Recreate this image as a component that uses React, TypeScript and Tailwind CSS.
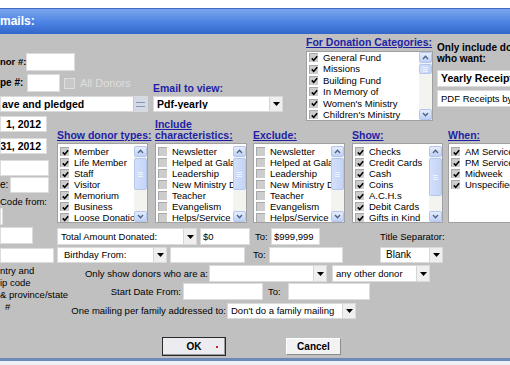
import React from "react";

const link = "font-bold text-[10.5px] text-[#1f1fa6] underline leading-[11px]";

const Check = () => (
  <svg width="7" height="7" viewBox="0 0 7 7">
    <path d="M0.8 3.4 L2.7 5.4 L6.2 1.2" fill="none" stroke="#000" strokeWidth="1.6" />
  </svg>
);

const Box = ({ checked }: { checked: boolean }) => (
  <span className="w-[9px] h-[9px] shrink-0 bg-[#cdcdcd] border-t border-l border-[#a8a8a8] flex items-center justify-center">
    {checked && <Check />}
  </span>
);

const Arrow = ({ up }: { up?: boolean }) => (
  <div className="h-[11px] shrink-0 rounded-[2px] border border-[#b4c6ee] bg-gradient-to-b from-[#e6eefd] to-[#c0d1f6] flex items-center justify-center">
    <svg width="7" height="5" viewBox="0 0 7 5">
      <path d={up ? "M1 4 L3.5 1.3 L6 4" : "M1 1 L3.5 3.7 L6 1"} fill="none" stroke="#4d6185" strokeWidth="1.4" />
    </svg>
  </div>
);

const ScrollBar = ({ thumb }: { thumb: string }) => (
  <div className="w-[13px] shrink-0 bg-[#f3f3ef] flex flex-col">
    <Arrow up />
    <div className={`${thumb} shrink-0 mt-[1px] rounded-[2px] border border-[#b4c6ee] bg-gradient-to-r from-[#d3e0fb] to-[#c4d4f7] flex flex-col items-center justify-center gap-[1px]`}>
      <div className="w-[5px] h-[1px] bg-[#eef3fe]" />
      <div className="w-[5px] h-[1px] bg-[#eef3fe]" />
      <div className="w-[5px] h-[1px] bg-[#eef3fe]" />
    </div>
    <div className="flex-1" />
    <Arrow />
  </div>
);

const ListBox = ({
  items,
  checked,
  className,
  row,
  thumb,
}: {
  items: string[];
  checked: boolean;
  className: string;
  row: string;
  thumb?: string;
}) => (
  <div className={`bg-white border border-[#a0a0a0] flex ${className}`}>
    <div className="flex-1 min-w-0 overflow-hidden pl-[2px]">
      {items.map((item) => (
        <div key={item} className={`flex items-center gap-[5px] whitespace-nowrap ${row}`}>
          <Box checked={checked} />
          <span>{item}</span>
        </div>
      ))}
    </div>
    {thumb && <ScrollBar thumb={thumb} />}
  </div>
);

const DownBtn = () => (
  <span className="w-[13px] h-full shrink-0 bg-[#efefef] border-l border-[#d6d6d6] flex items-center justify-center">
    <svg width="7" height="4" viewBox="0 0 7 4">
      <path d="M0 0 H7 L3.5 4 Z" fill="#000" />
    </svg>
  </span>
);

const Select = ({ text, className, bold }: { text: string; className: string; bold?: boolean }) => (
  <div className={`bg-white border border-[#dadada] flex items-center shrink-0 ${className}`}>
    <span className={`flex-1 min-w-0 overflow-hidden whitespace-nowrap pl-[3px] ${bold ? "font-bold text-[10.5px]" : ""}`}>
      {text}
    </span>
    <DownBtn />
  </div>
);

const Input = ({ className, children }: { className: string; children?: React.ReactNode }) => (
  <div className={`bg-white border border-[#dcdcdc] shrink-0 flex items-center overflow-hidden whitespace-nowrap ${className}`}>
    {children}
  </div>
);

const donation = ["General Fund", "Missions", "Building Fund", "In Memory of", "Women's Ministry", "Children's Ministry"];
const donorTypes = ["Member", "Life Member", "Staff", "Visitor", "Memorium", "Business", "Loose Donation"];
const characteristics = ["Newsletter", "Helped at Gala", "Leadership", "New Ministry Day", "Teacher", "Evangelism", "Helps/Service"];
const show = ["Checks", "Credit Cards", "Cash", "Coins", "A.C.H.s", "Debit Cards", "Gifts in Kind"];
const when = ["AM Service", "PM Service", "Midweek", "Unspecified"];

export default function App() {
  return (
    <div className="w-[510px] h-[365px] overflow-hidden bg-[#c0c0c0] flex flex-col font-['Liberation_Sans',Arial,sans-serif] text-[9.5px] text-black leading-none">
      <div className="h-[8px] bg-white shrink-0" />
      <div className="h-[26px] shrink-0 border-t border-[#3d6cc6] bg-gradient-to-b from-[#7aa5ee] via-[#4f86e4] to-[#3366cc] flex items-center pb-[1px] text-white font-bold text-[12px]">
        mails:
      </div>

      <div className="flex-1 flex flex-col">
        {/* top row */}
        <div className="flex h-[80px] shrink-0">
          <div className="w-[150px] shrink-0 pt-[19px] flex flex-col">
            <div className="flex items-center h-[18px]">
              <span className="w-[26px] font-bold text-[9.5px] whitespace-nowrap">nor #:</span>
              <Input className="w-[49px] h-[18px]" />
            </div>
            <div className="flex items-center h-[18px] mt-[3px]">
              <span className="w-[27px] font-bold text-[10px] whitespace-nowrap">pe #:</span>
              <Input className="w-[33px] h-[18px]" />
              <span className="ml-[4px] w-[11px] h-[11px] bg-[#c8c8c8] border border-[#dedede]" />
              <span className="ml-[5px] text-[11px] text-[#dedede] whitespace-nowrap">All Donors</span>
            </div>
            <div className="mt-[4px] w-[148px] h-[16px] bg-white border border-[#dadada] flex items-center">
              <span className="flex-1 font-bold text-[10.5px] pl-[1px] whitespace-nowrap">ave and pledged</span>
              <span className="w-[14px] h-full bg-[#d3dae6] border-l border-[#bcc5d6] flex flex-col items-center justify-center gap-[3px]">
                <span className="w-[9px] h-[1px] bg-[#8a96ad]" />
                <span className="w-[9px] h-[1px] bg-[#8a96ad]" />
              </span>
            </div>
          </div>

          <div className="w-[130px] shrink-0 ml-[3px] pt-[49px] flex flex-col">
            <span className="font-bold text-[10.5px] text-[#1f1fa6] h-[11px]">Email to view:</span>
            <Select text="Pdf-yearly" bold className="mt-[2px] w-[130px] h-[16px]" />
          </div>

          <div className="w-[127px] shrink-0 ml-[23px] pt-[3px] flex flex-col">
            <span className={link}>For Donation Categories:</span>
            <ListBox items={donation} checked className="mt-[3px] w-[127px] h-[70px]" row="h-[11.4px]" thumb="h-[10px]" />
          </div>

          <div className="w-[110px] shrink-0 ml-[4px] pt-[8px] flex flex-col font-bold text-[10px] leading-[11px]">
            <span className="whitespace-nowrap">Only include donors</span>
            <span>who want:</span>
            <Select text="Yearly Receipts" bold className="mt-[6px] w-[110px] h-[17px]" />
            <Input className="mt-[3px] w-[110px] h-[17px] font-normal text-[9.5px] pl-[3px]">PDF Receipts by email</Input>
          </div>
        </div>

        {/* main row */}
        <div className="flex flex-1">
          <div className="w-[57px] shrink-0 flex flex-col">
            <Input className="mt-[2px] w-[47px] h-[16px] justify-end pr-[5px] font-bold text-[10.5px]">1, 2012</Input>
            <Input className="mt-[6px] w-[47px] h-[16px] justify-end pr-[5px] font-bold text-[10.5px]">31, 2012</Input>
            <Input className="mt-[6px] w-[49px] h-[16px]" />
            <div className="flex items-center mt-[1px] h-[16px]">
              <span className="w-[10px] text-[10px]">e:</span>
              <Input className="w-[39px] h-[16px]" />
            </div>
            <span className="mt-[4px] h-[10px] text-[9.5px] whitespace-nowrap">Code from:</span>
            <Input className="mt-[1px] w-[3px] h-[17px]" />
            <Input className="mt-[2px] w-[33px] h-[17px]" />
            <Input className="mt-[4px] w-[54px] h-[15px]" />
            <div className="mt-[2px] flex flex-col leading-[12px] whitespace-nowrap text-[9.5px]">
              <span>ntry and</span>
              <span>ip code</span>
              <span>&amp; province/state</span>
              <span className="pl-[5px]">#</span>
            </div>
          </div>

          <div className="flex-1 flex flex-col">
            <div className="flex h-[29px] items-end pb-[2px]">
              <span className={`${link} w-[98px] shrink-0`}>Show donor types:</span>
              <span className={`${link} w-[98px] shrink-0 flex flex-col`}>
                <span>Include </span>
                <span>characteristics:</span>
              </span>
              <span className={`${link} w-[99px] shrink-0`}>Exclude:</span>
              <span className={`${link} w-[96px] shrink-0`}>Show:</span>
              <span className={`${link} shrink-0`}>When:</span>
            </div>
            <div className="flex">
              <ListBox items={donorTypes} checked className="w-[91px] h-[80px] shrink-0 pt-[2px]" row="h-[11px]" thumb="h-[32px]" />
              <ListBox items={characteristics} checked={false} className="ml-[7px] w-[92px] h-[80px] shrink-0 pt-[2px]" row="h-[11px]" thumb="h-[32px]" />
              <ListBox items={characteristics} checked={false} className="ml-[6px] w-[92px] h-[80px] shrink-0 pt-[2px]" row="h-[11px]" thumb="h-[32px]" />
              <ListBox items={show} checked className="ml-[7px] w-[91px] h-[80px] shrink-0 pt-[2px]" row="h-[11px]" thumb="h-[38px]" />
              <ListBox items={when} checked className="ml-[5px] w-[80px] h-[80px] shrink-0 pt-[2px]" row="h-[11px]" />
            </div>

            <div className="flex mt-[5px]">
              <div className="w-[286px] shrink-0 flex flex-col">
                <div className="flex items-center h-[17px]">
                  <Select text="Total Amount Donated:" className="w-[140px] h-[17px]" />
                  <Input className="ml-[3px] w-[50px] h-[17px] pl-[2px]">$0</Input>
                  <span className="ml-[5px] w-[16px]">To:</span>
                  <Input className="w-[49px] h-[17px] pl-[2px]">$999,999</Input>
                </div>
                <div className="flex items-center h-[16px] mt-[2px]">
                  <Select text="Birthday From:" className="w-[110px] h-[16px] pl-[3px]" />
                  <Input className="ml-[3px] w-[75px] h-[16px]" />
                  <span className="ml-[8px] w-[16px]">To:</span>
                  <Input className="w-[74px] h-[16px]" />
                </div>
              </div>
              <div className="ml-[37px] flex flex-col">
                <span className="mt-[4px] h-[10px] whitespace-nowrap">Title Separator:</span>
                <Select text="Blank" className="mt-[5px] w-[63px] h-[16px] text-[10px] pl-[2px]" />
              </div>
            </div>

            <div className="flex items-center h-[17px] mt-[2px]">
              <span className="w-[152px] shrink-0 text-right pr-[1px]">Only show donors who are a:</span>
              <Select text="" className="w-[118px] h-[17px]" />
              <Select text="any other donor" className="ml-[5px] w-[98px] h-[17px]" />
            </div>
            <div className="flex items-center h-[17px] mt-[1px]">
              <span className="w-[126px] shrink-0 text-right pr-[2px]">Start Date From:</span>
              <Input className="w-[80px] h-[17px]" />
              <span className="ml-[5px] w-[20px]">To:</span>
              <Input className="w-[82px] h-[17px]" />
            </div>
            <div className="flex items-center h-[16px] mt-[3px]">
              <span className="w-[170px] shrink-0 text-right pr-[1px]">One mailing per family addressed to:</span>
              <Select text="Don't do a family mailing" className="w-[129px] h-[16px]" />
            </div>

            <div className="flex items-start mt-[18px]">
              <button className="ml-[105px] w-[64px] h-[19px] border border-[#2a2a2a] bg-[#ececf0] shadow-[inset_-1px_-1px_0_#9a9a9a] flex items-center justify-center font-bold text-[10px] relative">
                OK
                <span className="absolute right-[7px] top-[8px] w-[2px] h-[2px] bg-[#d02020]" />
              </button>
              <button className="ml-[60px] mt-[1px] w-[54px] h-[16px] bg-[#f2f2f2] border-t border-l border-[#ffffff] shadow-[1px_1px_0_#8c8c8c] flex items-center justify-center font-bold text-[10px]">
                Cancel
              </button>
            </div>
          </div>
        </div>
      </div>

      <div className="h-[3px] shrink-0 bg-[#6d8ab9]" />
      <div className="h-[4px] shrink-0 bg-[#edf1f7]" />
    </div>
  );
}
